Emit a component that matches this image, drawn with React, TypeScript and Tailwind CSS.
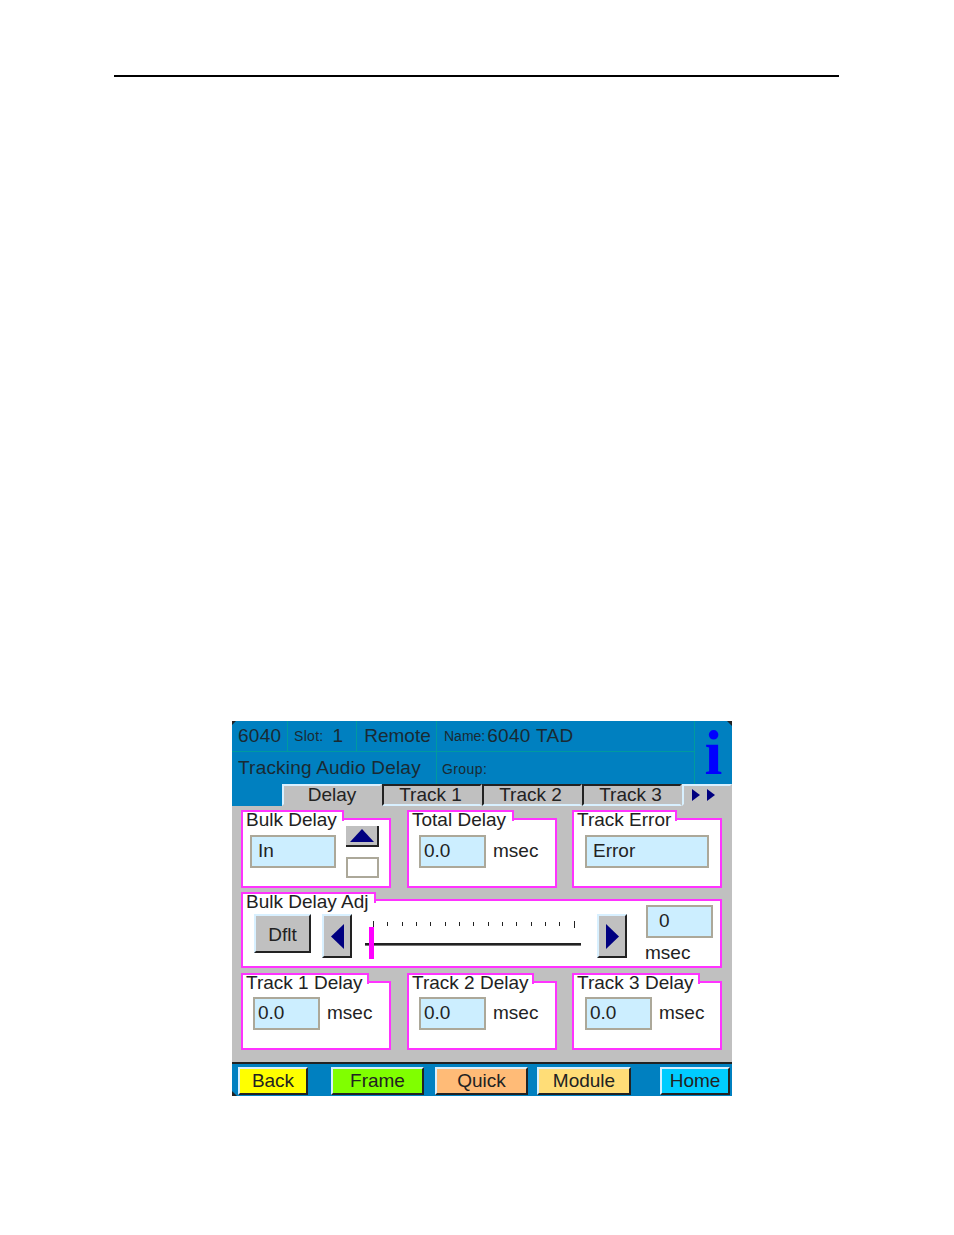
import type { ReactNode } from "react"

const BLUE = "bg-[#0080c0]"
const LINE = "border-[#009a9f]"

function Panel({ title, tabW, className, pt = "pt-[8px]", children }: { title: string; tabW: string; className: string; pt?: string; children: ReactNode }) {
  return (
    <div className={`relative ${pt} ${className}`}>
      {/* label sits over the top edge, makes the notch */}
      <div className={`absolute left-0 top-0 z-10 h-[11px] border-x-2 border-t-2 border-[#ff33ff] bg-white ${tabW}`} />
      <span className="absolute left-[5px] top-[-1px] z-20 whitespace-nowrap text-[19px] leading-[22px] text-[#222]">{title}</span>
      <div className="h-full border-2 border-[#ff33ff] bg-white">{children}</div>
    </div>
  )
}

function Field({ value, className }: { value: string; className: string }) {
  return (
    <div className={`flex h-[33px] items-center border-2 border-[#aca899] bg-[#cceeff] pb-[2px] text-[19px] leading-none text-[#222] ${className}`}>
      {value}
    </div>
  )
}

function Raised({ className, children }: { className: string; children: ReactNode }) {
  return (
    <div className={`flex items-center justify-center border-2 border-b-[#222] border-l-[#d8f0ff] border-r-[#222] border-t-[#d8f0ff] bg-[#c0c0c0] ${className}`}>
      {children}
    </div>
  )
}

function Tab({ label, active }: { label: string; active?: boolean }) {
  return (
    <div
      className={`flex h-[22px] w-[100px] items-center justify-center border-2 bg-[#c0c0c0] pb-[1px] text-[19px] leading-none text-[#222] ${
        active
          ? "border-b-[#c0c0c0] border-l-[#d8f0ff] border-r-[#c0c0c0] border-t-[#d8f0ff]"
          : "border-b-[#d8f0ff] border-l-[#222] border-r-[#c0c0c0] border-t-[#222] pr-[3px]"
      }`}
    >
      {label}
    </div>
  )
}

function FootBtn({ label, className }: { label: string; className: string }) {
  return (
    <div className={`flex h-[28px] items-center justify-center border-2 border-b-[#222] border-l-[#d8f0ff] border-r-[#222] border-t-[#d8f0ff] pb-[1px] text-[19px] leading-none text-[#222] ${className}`}>
      {label}
    </div>
  )
}

function Slider() {
  return (
    <div className="relative ml-[13px] mt-[20px] h-[38px] w-[216px]">
      <div className="flex justify-between pl-[8px] pr-[6px]">
        {Array.from({ length: 15 }).map((_, i) => (
          <div key={i} className={`w-[1px] bg-[#222] ${i === 0 || i === 14 ? "h-[7px]" : "mt-[1px] h-[4px]"}`} />
        ))}
      </div>
      <div className="mt-[15px] h-[3px] border-b border-[#777] bg-[#222]" />
      {/* thumb */}
      <div className="absolute left-[4px] top-[6px] h-[32px] w-[5px] bg-[#ff00ff]" />
    </div>
  )
}

function Arrow() {
  return (
    <svg width="8" height="12" viewBox="0 0 8 12"><path d="M0 0L8 6L0 12Z" fill="#000080" /></svg>
  )
}

function Msec({ className }: { className: string }) {
  return <span className={`text-[19px] text-[#222] ${className}`}>msec</span>
}

export default function App() {
  return (
    <div className="h-[1235px] w-[954px] overflow-hidden bg-white pt-[75px] font-['Liberation_Sans',Arial,sans-serif]">
      <div className="ml-[114px] h-[2px] w-[725px] bg-black" />

      <div className="relative ml-[232px] mt-[644px] flex h-[375px] w-[500px] flex-col">
        {/* little dark corners of the device screen */}
        <svg className="absolute left-0 top-0 z-30" width="4" height="4" viewBox="0 0 4 4"><path d="M0 0H4L0 4Z" fill="#222" /></svg>
        <svg className="absolute right-0 top-0 z-30" width="5" height="5" viewBox="0 0 5 5"><path d="M0 0H5V5Z" fill="#222" /></svg>
        <svg className="absolute bottom-0 left-0 z-30" width="5" height="5" viewBox="0 0 5 5"><path d="M0 0L5 5H0Z" fill="#222" /></svg>

        {/* header */}
        <div className={`flex h-[63px] ${BLUE} text-[#1a2a33]`}>
          <div className="flex w-[462px] flex-col">
            <div className={`flex h-[31px] border-b ${LINE}`}>
              <div className={`flex w-[56px] items-center border-r ${LINE} pl-[6px] text-[19px] tracking-[0.3px]`}>6040</div>
              <div className={`flex w-[69px] items-center border-r ${LINE} pl-[6px] text-[19px]`}>
                <span className="mr-[9px] text-[14px] tracking-[0.3px]">Slot:</span>1
              </div>
              <div className={`flex w-[80px] items-center justify-center border-r ${LINE} pl-[2px] text-[19px]`}>Remote</div>
              <div className="flex flex-1 items-center pl-[7px] text-[19px] tracking-[0.3px]">
                <span className="mr-[2px] text-[14px] tracking-normal">Name:</span>6040 TAD
              </div>
            </div>
            <div className="flex flex-1">
              <div className={`flex w-[205px] items-center border-r ${LINE} pl-[6px] text-[19px] tracking-[0.2px]`}>Tracking Audio Delay</div>
              <div className="flex flex-1 items-center pl-[5px] pt-[2px] text-[14px] tracking-[0.4px]">Group:</div>
            </div>
          </div>
          <div className={`flex flex-1 items-center justify-center border-l ${LINE}`}>
            <span className="font-['Liberation_Serif',serif] text-[64px] font-bold leading-none text-[#0000ff]">i</span>
          </div>
        </div>

        {/* tabs */}
        <div className={`flex h-[22px] ${BLUE} pl-[50px]`}>
          <Tab label="Delay" active />
          <Tab label="Track 1" />
          <Tab label="Track 2" />
          <Tab label="Track 3" />
          <div className="flex h-[22px] w-[50px] items-center gap-[7px] border-2 border-b-[#c0c0c0] border-l-[#d8f0ff] border-r-[#c0c0c0] border-t-[#d8f0ff] bg-[#c0c0c0] pl-[8px]">
            <Arrow />
            <Arrow />
          </div>
        </div>

        {/* body */}
        <div className="flex flex-1 flex-col bg-[#c0c0c0] pl-[9px] pt-[4px]">
          <div className="flex h-[78px]">
            <Panel title="Bulk Delay" tabW="w-[103px]" className="w-[150px]">
              <div className="flex pl-[7px] pt-[15px]">
                <Field value="In" className="w-[86px] pl-[6px]" />
                <div className="relative z-20 -mt-[9px] ml-[10px] flex flex-col">
                  <div className="flex h-[21px] w-[33px] items-center justify-center border-b-2 border-r-2 border-b-[#222] border-r-[#222] bg-[#c0c0c0]">
                    <svg width="24" height="13" viewBox="0 0 24 13"><path d="M12 0L24 13H0Z" fill="#000080" /></svg>
                  </div>
                  <div className="mt-[10px] h-[21px] w-[33px] border-2 border-[#aca899] bg-white" />
                </div>
              </div>
            </Panel>
            <Panel title="Total Delay" tabW="w-[107px]" className="ml-[16px] w-[150px]">
              <div className="flex items-center pl-[10px] pt-[15px]">
                <Field value="0.0" className="w-[67px] pl-[3px]" />
                <Msec className="ml-[7px] -mt-[1px]" />
              </div>
            </Panel>
            <Panel title="Track Error" tabW="w-[105px]" className="ml-[15px] w-[150px]">
              <div className="pl-[11px] pt-[15px]">
                <Field value="Error" className="w-[124px] pl-[6px]" />
              </div>
            </Panel>
          </div>

          <div className="mt-[4px] h-[76px] w-[481px]">
            <Panel title="Bulk Delay Adj" tabW="w-[135px]" className="h-full w-full" pt="pt-[7px]">
              <div className="flex">
                <Raised className="ml-[11px] mt-[13px] h-[39px] w-[57px] pt-[1px] text-[19px] leading-none text-[#222]">Dflt</Raised>
                <Raised className="ml-[11px] mt-[13px] h-[44px] w-[30px]">
                  <svg width="13" height="25" viewBox="0 0 13 25"><path d="M13 0V25L0 12.5Z" fill="#000080" /></svg>
                </Raised>
                <Slider />
                <Raised className="ml-[16px] mt-[13px] h-[44px] w-[30px]">
                  <svg width="13" height="25" viewBox="0 0 13 25"><path d="M0 0V25L13 12.5Z" fill="#000080" /></svg>
                </Raised>
                <div className="ml-[19px] flex flex-col pt-[4px]">
                  <Field value="0" className="w-[67px] pl-[11px]" />
                  <Msec className="-ml-[1px] mt-[3px] leading-[24px]" />
                </div>
              </div>
            </Panel>
          </div>

          <div className="mt-[5px] flex h-[77px]">
            {[
              { t: "Track 1 Delay", w: "w-[128px]", c: "w-[150px]", p: "pl-[10px]" },
              { t: "Track 2 Delay", w: "w-[127px]", c: "ml-[16px] w-[150px]", p: "pl-[10px]" },
              { t: "Track 3 Delay", w: "w-[128px]", c: "ml-[15px] w-[150px]", p: "pl-[11px]" },
            ].map((b) => (
              <Panel key={b.t} title={b.t} tabW={b.w} className={b.c}>
                <div className={`flex items-center pt-[14px] ${b.p}`}>
                  <Field value="0.0" className="w-[67px] pl-[3px]" />
                  <Msec className="ml-[7px] -mt-[1px]" />
                </div>
              </Panel>
            ))}
          </div>
        </div>

        {/* footer */}
        <div className={`flex h-[34px] items-start border-t-2 border-[#222] ${BLUE} pl-[6px] pt-[3px]`}>
          <FootBtn label="Back" className="w-[70px] bg-[#ffff00]" />
          <FootBtn label="Frame" className="ml-[23px] w-[93px] bg-[#80ff00]" />
          <FootBtn label="Quick" className="ml-[11px] w-[93px] bg-[#ffbb77]" />
          <FootBtn label="Module" className="ml-[9px] w-[94px] bg-[#ffdd77]" />
          <FootBtn label="Home" className="ml-[29px] w-[70px] bg-[#00ccff]" />
        </div>
      </div>
    </div>
  )
}
